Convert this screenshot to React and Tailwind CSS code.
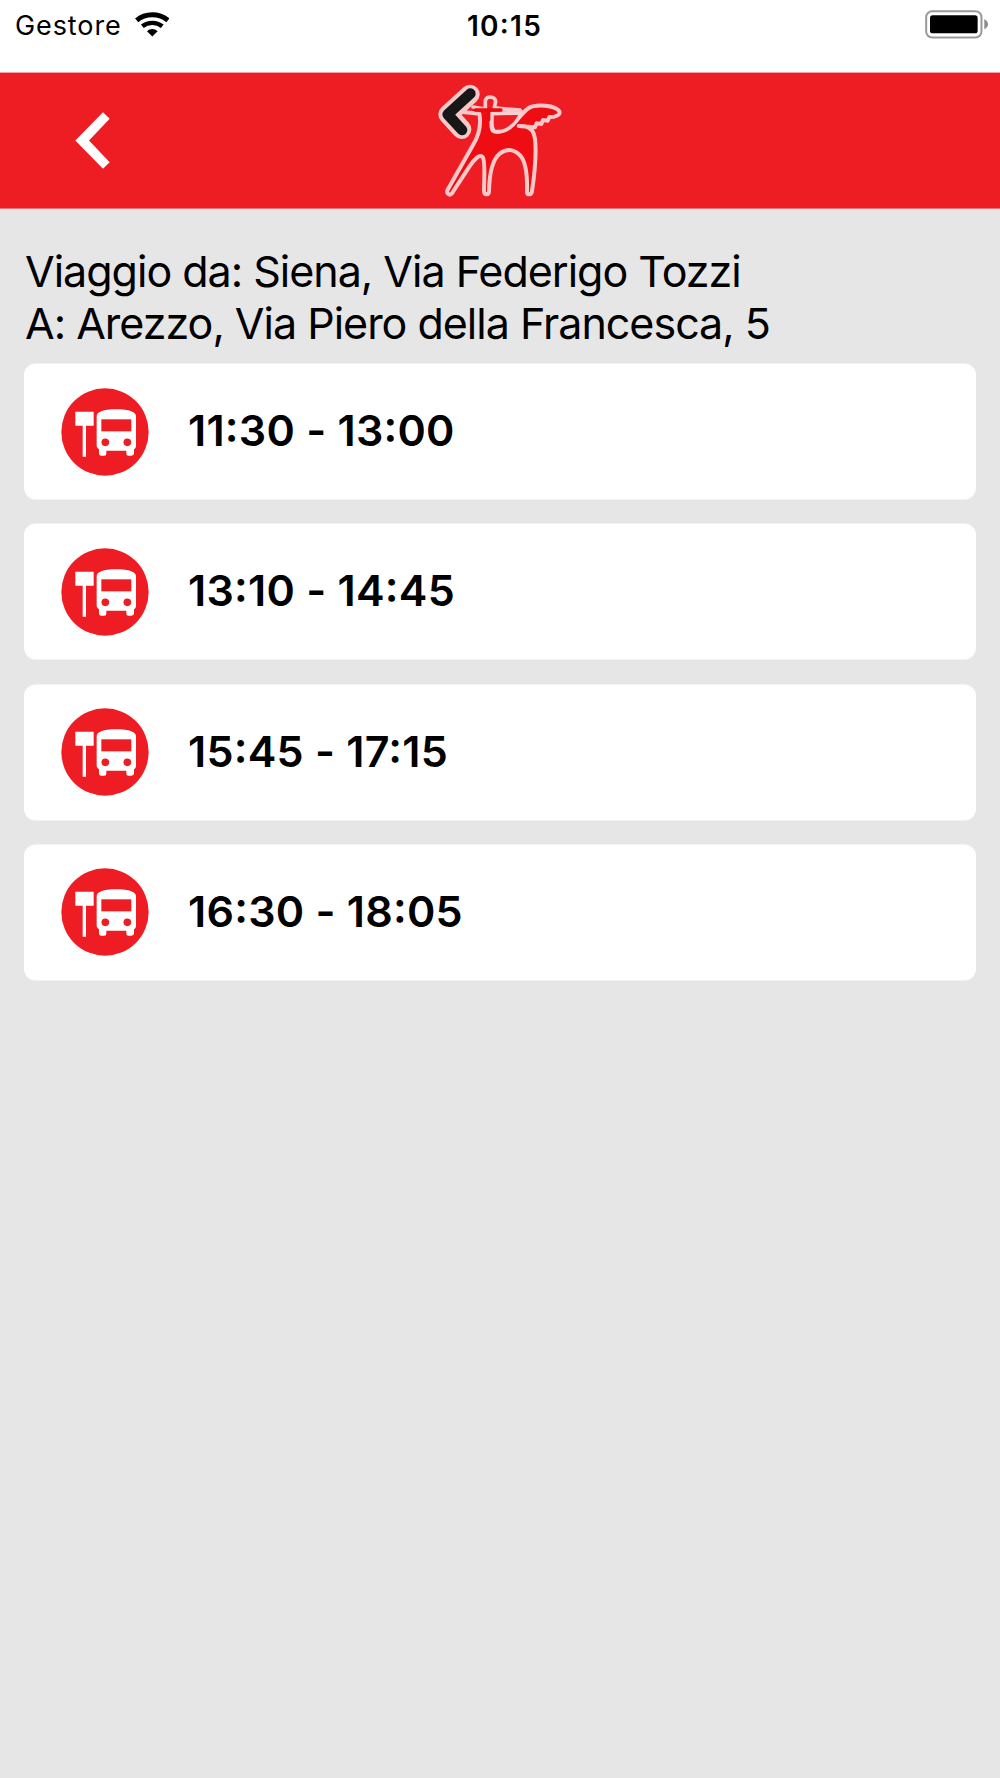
import React from "react";

const trips = [
  { id: 1, start: "11:30", end: "13:00" },
  { id: 2, start: "13:10", end: "14:45" },
  { id: 3, start: "15:45", end: "17:15" },
  { id: 4, start: "16:30", end: "18:05" },
];

const WifiIcon = () => (
  <svg viewBox="0 0 104 74" className="w-[34.6px] h-[24.6px]" fill="none" stroke="#000">
    <path d="M5 25 C31 3 73 3 99 25" strokeWidth="15" />
    <path d="M22 43 C39 29 65 29 82 43" strokeWidth="13" />
    <path d="M36 58 C46 49 58 49 68 58 L52 74 Z" fill="#000" stroke="none" />
  </svg>
);

const BatteryIcon = () => (
  <svg viewBox="0 0 190 86" className="w-[63.3px] h-[28.7px]">
    <rect x="3.5" y="3.5" width="166" height="79" rx="18" fill="#fff" stroke="#999" strokeWidth="6" />
    <rect x="15" y="16" width="143" height="54" rx="8" fill="#000" />
    <path d="M178 27 Q189 34 189 43 Q189 52 178 58 Z" fill="#8a8a8a" />
  </svg>
);

const BusIcon = () => (
  <svg viewBox="0 0 264 264" className="w-[88px] h-[88px] shrink-0">
    <circle cx="132" cy="132" r="131" fill="#ee1d24" />
    <path d="M43 71H98V113H75V206H65V113H43Z" fill="#fff" />
    <path
      d="M107 85 C107 72 126 64 166 64 C206 64 225 72 225 85 V174 Q225 181 219 184 V196 Q219 203 212 203 H202 Q196 203 196 197 V188 H136 V197 Q136 203 130 203 H120 Q114 203 114 196 V184 Q107 180 107 174 Z"
      fill="#fff"
    />
    <rect x="121" y="94" width="90" height="36" fill="#ee1d24" />
    <circle cx="133" cy="163" r="11.5" fill="#ee1d24" />
    <circle cx="199" cy="163" r="11.5" fill="#ee1d24" />
  </svg>
);

// winged horse with the dark arrow in front of it
const Logo = () => (
  <svg viewBox="53 40 380 345" className="w-[126.7px] h-[115px]" strokeLinejoin="round" strokeLinecap="round">
    <path
      d="M130 127 L180 132 C186 165 180 195 161 226 L84 362 Q82 374 91 375 Q98 374 101 366 L150 291 C164 269 181 252 190 262 C199 274 194 330 194 364 Q194 374 202 374 Q209 374 209 364 C210 318 217 270 242 251 C264 235 286 239 303 258 C322 280 324 330 323 366 Q323 374 330 374 Q337 374 338 364 C346 310 352 250 347 208 C344 185 334 173 316 170 L298 169 L347 173 L352 161 L366 163 L371 151 L385 153 L390 142 L405 141 Q424 136 420 125 C409 106 350 102 328 115 C310 127 297 149 280 166 C264 183 239 190 224 185 C212 179 218 154 216 132 L306 130 L302 122 L228 116"
      fill="#ee0d12"
      stroke="#fbc8c9"
      strokeWidth="12"
    />
    <path d="M219 133 L304 131 C292 157 266 190 226 184 C214 175 220 154 219 133 Z" fill="#ee1d24" stroke="#fbd0d0" strokeWidth="9" />
    <path d="M161 112 L198 118 V92 Q202 82 212 82 Q228 83 229 96 L225 113 L249 121 L300 122" fill="none" stroke="#fbc8c9" strokeWidth="11" />
    <path d="M168 121 H245 M208 121 V150" fill="none" stroke="#e90b10" strokeWidth="10" />
    <path d="M152 74 L86 134 L127 179" fill="none" stroke="#f7caca" strokeWidth="58" />
    <path d="M153 72 L85 134 L128 181" fill="none" stroke="#171717" strokeWidth="32" />
  </svg>
);

function TripCard({ trip }) {
  return (
    <div className="flex h-[137px] items-center rounded-xl border-y border-[#f3f3f3] bg-white pl-[37px]">
      <BusIcon />
      <p className="ml-[39px] pb-[3px] text-[43px] leading-[52px] font-semibold tracking-[0.25px] whitespace-nowrap [font-feature-settings:'calt']">
        {trip.start}
        <span className="[font-feature-settings:'calt'_0]"> - </span>
        {trip.end}
      </p>
    </div>
  );
}

function App() {
  return (
    <div className="h-[1778px] w-full overflow-hidden bg-[#e6e6e6] font-['Inter','Liberation_Sans',sans-serif] text-black">
      {/* STATUS BAR */}
      <div className="grid h-[72px] grid-cols-3 items-start bg-white">
        <div className="flex items-start pl-[15px] pt-[10px]">
          <span className="text-[27px] leading-[32px] tracking-[0.9px]">Gestore</span>
          <span className="ml-[13px] mt-[2px]">
            <WifiIcon />
          </span>
        </div>
        <p className="pl-[9px] pt-[10px] text-center text-[28px] leading-[32px] font-semibold tracking-[1.3px] [font-feature-settings:'calt']">
          10:15
        </p>
        <div className="flex justify-end pr-[12px] pt-[10px]">
          <BatteryIcon />
        </div>
      </div>

      {/* HEADER */}
      <header className="grid h-[137px] grid-cols-3 items-center border-y border-t-[#f6a3a7] border-b-[#eb7277] bg-[#ee1d24]">
        <button className="ml-[75px] w-[36px]" aria-label="Indietro">
          <svg viewBox="0 0 108 170" className="h-[57px] w-[36px]">
            <path d="M84 0 L104 20 L42 85 L104 150 L84 170 L1 85 Z" fill="#fff" />
          </svg>
        </button>
        <div className="flex justify-center">
          <Logo />
        </div>
      </header>

      {/* LISTA VIAGGI */}
      <main className="px-[24px] pt-[36px]">
        <div className="pl-px text-[43px] leading-[52px] tracking-[-1px] whitespace-nowrap">
          <p>Viaggio da: Siena, Via Federigo Tozzi</p>
          <p>A: Arezzo, Via Piero della Francesca, 5</p>
        </div>
        <div className="mt-[14px] flex flex-col gap-[23.25px]">
          {trips.map((trip) => (
            <TripCard key={trip.id} trip={trip} />
          ))}
        </div>
      </main>
    </div>
  );
}

export default App;
